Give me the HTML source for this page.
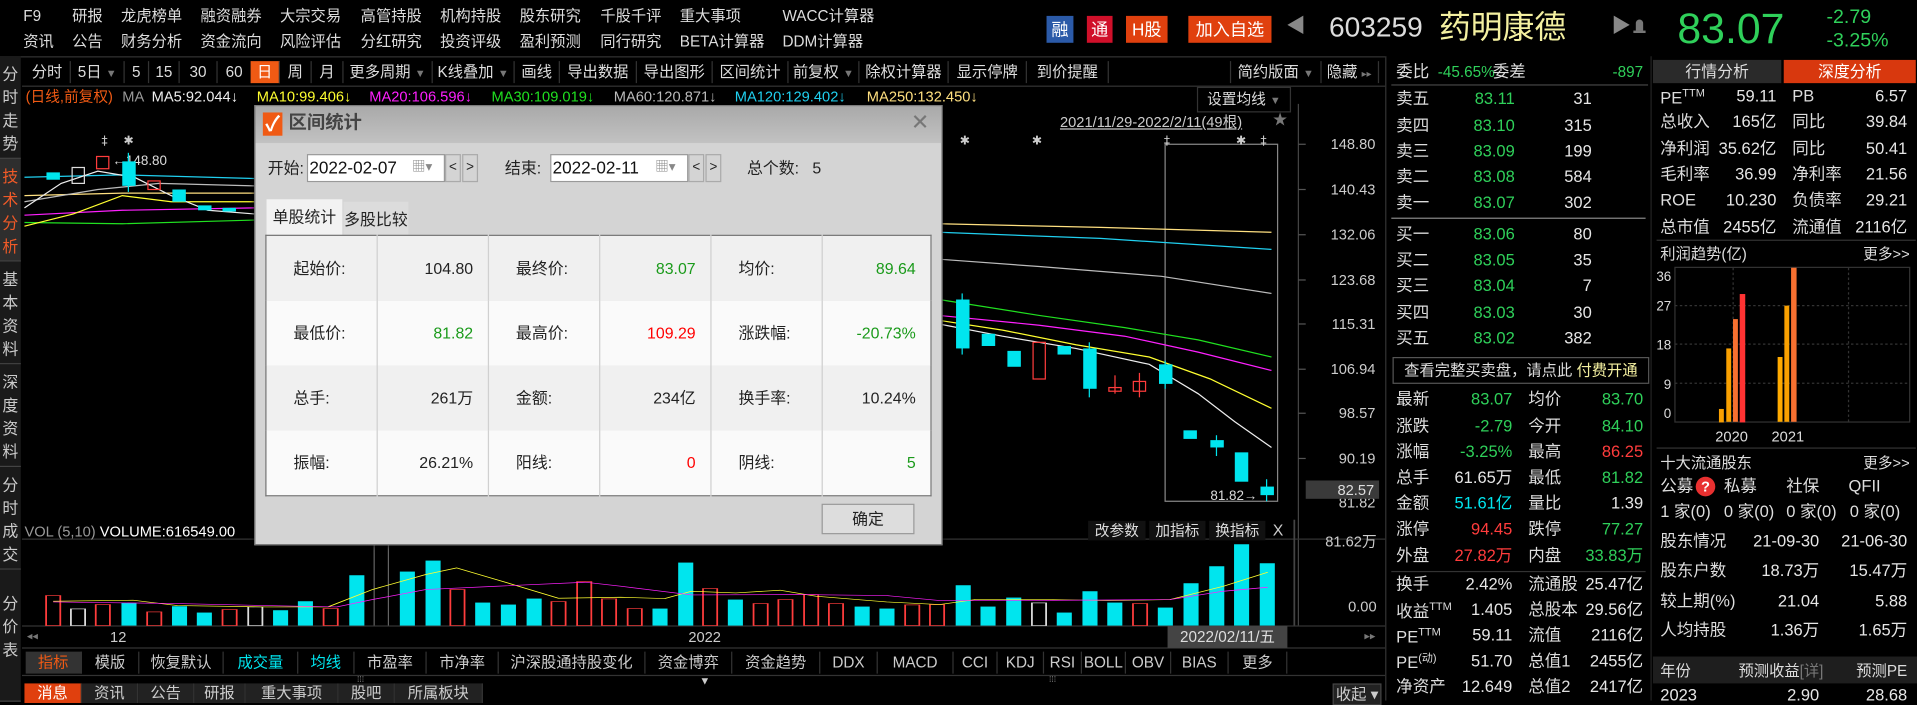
<!DOCTYPE html>
<html><head><meta charset="utf-8">
<style>
html,body{margin:0;padding:0;background:#000;overflow:hidden;width:1917px;height:701px}
#s{position:absolute;left:0;top:0;width:1568px;height:573px;transform:scale(1.22258);transform-origin:0 0;background:#000;font-family:"Liberation Sans","Noto Sans CJK SC",sans-serif;color:#ddd;font-size:12.5px}
.a{position:absolute;white-space:nowrap;line-height:1}
.g{color:#2fd05a}.r{color:#ff3c3c}.w{color:#e6e6e6}.c{color:#00e5ee}.y{color:#ffff40}
.tb{position:absolute;top:50px;height:18px;line-height:18px;text-align:center;border-right:1px solid #333;color:#ddd;font-size:12.5px}
.it{position:absolute;top:533px;height:18px;line-height:18px;text-align:center;border-right:1px solid #333;font-size:12.5px;color:#ccc}
.bt{position:absolute;top:559px;height:16px;line-height:16px;text-align:center;background:#222;border-right:1px solid #333;font-size:12.5px;color:#ccc}
.lt{position:absolute;left:0;width:17px;text-align:center;font-size:13px;line-height:19px;color:#ccc;background:#1a1a1a;border-bottom:1px solid #444}
.ob{font-size:13.5px}
.dl td{border-right:1px solid #d0d0d0;font-size:13px;color:#222;height:53px;padding:0}
</style></head><body><div id="s">

<div class="a" style="top:7px;left:19px;font-size:12.5px">F9</div>
<div class="a" style="top:7px;left:59px">研报</div><div class="a" style="top:7px;left:99px">龙虎榜单</div><div class="a" style="top:7px;left:164px">融资融券</div><div class="a" style="top:7px;left:229px">大宗交易</div><div class="a" style="top:7px;left:295px">高管持股</div><div class="a" style="top:7px;left:360px">机构持股</div><div class="a" style="top:7px;left:425px">股东研究</div><div class="a" style="top:7px;left:491px">千股千评</div><div class="a" style="top:7px;left:556px">重大事项</div><div class="a" style="top:7px;left:640px">WACC计算器</div>
<div class="a" style="top:28px;left:19px">资讯</div><div class="a" style="top:28px;left:59px">公告</div><div class="a" style="top:28px;left:99px">财务分析</div><div class="a" style="top:28px;left:164px">资金流向</div><div class="a" style="top:28px;left:229px">风险评估</div><div class="a" style="top:28px;left:295px">分红研究</div><div class="a" style="top:28px;left:360px">投资评级</div><div class="a" style="top:28px;left:425px">盈利预测</div><div class="a" style="top:28px;left:491px">同行研究</div><div class="a" style="top:28px;left:556px">BETA计算器</div><div class="a" style="top:28px;left:640px">DDM计算器</div>

<div class="a" style="left:856px;top:13px;width:22px;height:22px;background:#2b5aa8;color:#fff;font-size:14px;line-height:22px;text-align:center">融</div>
<div class="a" style="left:889px;top:13px;width:21px;height:22px;background:#d0102a;color:#fff;font-size:14px;line-height:22px;text-align:center">通</div>
<div class="a" style="left:921px;top:13px;width:34px;height:22px;background:#e0400e;color:#fff;font-size:14px;line-height:22px;text-align:center">H股</div>
<div class="a" style="left:972px;top:13px;width:68px;height:22px;background:#e0400e;color:#fff;font-size:14px;line-height:22px;text-align:center">加入自选</div>
<div class="a" style="left:1052px;top:14px;color:#888;font-size:16px">◀</div>
<div class="a" style="left:1087px;top:11px;color:#ddd;font-size:23px">603259</div>
<div class="a" style="left:1177px;top:9px;color:#f4f0a0;font-size:26px">药明康德</div>
<div class="a" style="left:1318px;top:14px;color:#888;font-size:16px">▶</div>
<div class="a" style="left:1338px;top:16px;width:6px;height:9px;background:#777;border-radius:3px 3px 0 0"></div>
<div class="a" style="left:1336px;top:25px;width:10px;height:2px;background:#777"></div>
<div class="a g" style="left:1372px;top:6px;font-size:35px">83.07</div>
<div class="a g" style="left:1494px;top:7px;font-size:16px">-2.79</div>
<div class="a g" style="left:1494px;top:26px;font-size:16px">-3.25%</div>

<div class="a" style="left:0;top:46px;width:1133px;height:1px;background:#333"></div>
<div class="tb" style="left:20px;width:37px">分时</div>
<div class="tb" style="left:58px;width:43px">5日 <span style="color:#777;font-size:9px">▼</span></div>
<div class="tb" style="left:102px;width:19px">5</div>
<div class="tb" style="left:122px;width:24px">15</div>
<div class="tb" style="left:147px;width:30px">30</div>
<div class="tb" style="left:178px;width:27px">60</div>
<div class="tb" style="left:205px;width:23px;background:#f05a14;color:#fff">日</div>
<div class="tb" style="left:229px;width:25px">周</div>
<div class="tb" style="left:255px;width:25px">月</div>
<div class="tb" style="left:281px;width:72px">更多周期 <span style="color:#777;font-size:9px">▼</span></div>
<div class="tb" style="left:354px;width:66px">K线叠加 <span style="color:#777;font-size:9px">▼</span></div>
<div class="tb" style="left:421px;width:36px">画线</div>
<div class="tb" style="left:458px;width:62px">导出数据</div>
<div class="tb" style="left:521px;width:61px">导出图形</div>
<div class="tb" style="left:583px;width:61px">区间统计</div>
<div class="tb" style="left:645px;width:57px">前复权 <span style="color:#777;font-size:9px">▼</span></div>
<div class="tb" style="left:703px;width:72px">除权计算器</div>
<div class="tb" style="left:776px;width:63px">显示停牌</div>
<div class="tb" style="left:840px;width:66px">到价提醒</div>
<div class="tb" style="left:1006px;width:73px;border-left:1px solid #333">简约版面 <span style="color:#777;font-size:9px">▼</span></div>
<div class="tb" style="left:1080px;width:47px">隐藏 <span style="color:#777;font-size:8px">▸▸</span></div>
<div class="a" style="left:18px;top:70px;width:1115px;height:1px;background:#333"></div>

<div class="lt" style="top:46px;height:83px"><div style="padding-top:5px">分<br>时<br>走<br>势</div></div>
<div class="lt" style="top:130px;height:83px;background:#2e2e2e;color:#f05a28"><div style="padding-top:5px">技<br>术<br>分<br>析</div></div>
<div class="lt" style="top:214px;height:83px"><div style="padding-top:5px">基<br>本<br>资<br>料</div></div>
<div class="lt" style="top:298px;height:83px"><div style="padding-top:5px">深<br>度<br>资<br>料</div></div>
<div class="lt" style="top:382px;height:83px"><div style="padding-top:5px">分<br>时<br>成<br>交</div></div>
<div class="lt" style="top:466px;height:107px"><div style="padding-top:18px">分<br>价<br>表</div></div>

<div class="a" style="top:73px;left:21px;font-size:12px;color:#f05a14">(日线,前复权)</div>
<div class="a" style="top:73px;left:100px;font-size:12px;color:#999">MA</div>
<div class="a" style="top:73px;left:124px;font-size:12px;color:#eee">MA5:92.044↓</div>
<div class="a" style="top:73px;left:210px;font-size:12px;color:#ffff30">MA10:99.406↓</div>
<div class="a" style="top:73px;left:302px;font-size:12px;color:#ff20ff">MA20:106.596↓</div>
<div class="a" style="top:73px;left:402px;font-size:12px;color:#20e020">MA30:109.019↓</div>
<div class="a" style="top:73px;left:502px;font-size:12px;color:#bbb">MA60:120.871↓</div>
<div class="a" style="top:73px;left:601px;font-size:12px;color:#20d0f0">MA120:129.402↓</div>
<div class="a" style="top:73px;left:709px;font-size:12px;color:#ffe080">MA250:132.450↓</div>
<div class="a" style="left:979px;top:71px;width:75px;height:19px;border:1px solid #333;font-size:12px;line-height:19px;text-align:center">设置均线 <span style="color:#777;font-size:9px">▼</span></div>
<div class="a" style="left:867px;top:94px;font-size:12px;color:#ccc;text-decoration:underline">2021/11/29-2022/2/11(49根)</div>
<div class="a" style="left:1041px;top:92px;font-size:12px;color:#777">★</div>

<svg class="a" style="left:0;top:0" width="1568" height="573">
<line x1="1062" y1="85" x2="1062" y2="512" stroke="#444"/>
<g fill="#ccc" font-size="12" font-family="Liberation Sans" text-anchor="end">
<text x="1125" y="122">148.80</text><text x="1125" y="159">140.43</text><text x="1125" y="196">132.06</text><text x="1125" y="233">123.68</text><text x="1125" y="269">115.31</text><text x="1125" y="306">106.94</text><text x="1125" y="342">98.57</text><text x="1125" y="379">90.19</text><text x="1125" y="415">81.82</text>
</g>
<g stroke="#555"><line x1="1062" y1="118" x2="1068" y2="118"/><line x1="1062" y1="155" x2="1068" y2="155"/><line x1="1062" y1="192" x2="1068" y2="192"/><line x1="1062" y1="229" x2="1068" y2="229"/><line x1="1062" y1="265" x2="1068" y2="265"/><line x1="1062" y1="302" x2="1068" y2="302"/><line x1="1062" y1="338" x2="1068" y2="338"/><line x1="1062" y1="375" x2="1068" y2="375"/></g>
<rect x="1068" y="393" width="60" height="15" fill="#3a3a3a"/><text x="1124" y="405" fill="#ddd" font-size="12" font-family="Liberation Sans" text-anchor="end">82.57</text>
<rect x="953" y="118" width="92" height="292" fill="none" stroke="#888"/>
<g fill="#ccc" font-size="10" font-family="DejaVu Sans"><text x="83" y="118">‡</text><text x="101" y="118">✱</text><text x="356" y="118">✱</text><text x="762" y="118">‡</text><text x="785" y="118">✱</text><text x="844" y="118">✱</text><text x="952" y="118">‡</text><text x="1011" y="118">✱</text><text x="1031" y="118">‡</text></g>
<text x="92" y="135" fill="#ddd" font-size="11" font-family="Liberation Sans">←148.80</text>
<text x="990" y="409" fill="#ddd" font-size="11" font-family="Liberation Sans">81.82→</text>
<g fill="none" stroke-width="1">
<polyline stroke="#ffe080" points="20,160 100,158 208,158"/>
<polyline stroke="#20d0f0" points="20,145 100,143 208,146"/>
<polyline stroke="#bbb" points="20,165 80,155 130,150 208,152"/>
<polyline stroke="#20e020" points="20,182 100,183 208,180"/>
<polyline stroke="#ff20ff" points="20,176 100,172 208,170"/>
<polyline stroke="#ffff30" points="20,185 60,175 100,160 140,165 208,165"/>
<polyline stroke="#eee" points="20,170 50,150 80,140 110,145 140,160 170,172 208,175"/>
<polyline stroke="#ffe080" points="768,183 900,186 1040,190"/>
<polyline stroke="#20d0f0" points="768,190 900,195 1040,204"/>
<polyline stroke="#bbb" points="768,212 850,218 950,226 1040,240"/>
<polyline stroke="#20e020" points="768,245 850,258 920,268 980,278 1040,292"/>
<polyline stroke="#ff20ff" points="768,258 850,266 920,275 980,288 1040,303"/>
<polyline stroke="#ffff30" points="768,262 820,270 880,282 940,292 990,310 1040,334"/>
<polyline stroke="#eee" points="768,265 820,275 880,285 940,298 980,322 1010,345 1040,366"/>
</g>
<g stroke-width="1">
<rect x="38" y="141" width="11" height="6" fill="#00e5ee"/>
<rect x="59" y="137" width="10" height="13" fill="none" stroke="#ddd"/>
<rect x="79" y="128" width="10" height="10" fill="none" stroke="#ff3c3c"/>
<line x1="105" y1="125" x2="105" y2="157" stroke="#00e5ee"/><rect x="100" y="132" width="11" height="20" fill="#00e5ee"/>
<rect x="121" y="148" width="10" height="7" fill="none" stroke="#ff3c3c"/>
<rect x="141" y="155" width="11" height="10" fill="#00e5ee"/>
<rect x="162" y="168" width="11" height="4" fill="#00e5ee"/>
<rect x="182" y="170" width="11" height="3" fill="#00e5ee"/>
<line x1="787" y1="240" x2="787" y2="290" stroke="#00e5ee"/><rect x="782" y="245" width="11" height="40" fill="#00e5ee"/>
<rect x="803" y="273" width="11" height="10" fill="#00e5ee"/>
<rect x="824" y="287" width="11" height="13" fill="#00e5ee"/>
<rect x="845" y="280" width="10" height="30" fill="none" stroke="#ff3c3c"/>
<rect x="865" y="283" width="11" height="7" fill="#00e5ee"/>
<line x1="891" y1="280" x2="891" y2="325" stroke="#00e5ee"/><rect x="886" y="285" width="11" height="33" fill="#00e5ee"/>
<line x1="912" y1="307" x2="912" y2="322" stroke="#ff3c3c"/><rect x="907" y="317" width="10" height="3" fill="none" stroke="#ff3c3c"/>
<line x1="932" y1="305" x2="932" y2="325" stroke="#ff3c3c"/><rect x="927" y="312" width="10" height="8" fill="none" stroke="#ff3c3c"/>
<line x1="953" y1="295" x2="953" y2="318" stroke="#00e5ee"/><rect x="948" y="298" width="11" height="16" fill="#00e5ee"/>
<rect x="968" y="352" width="11" height="7" fill="#00e5ee"/>
<line x1="995" y1="356" x2="995" y2="373" stroke="#00e5ee"/><rect x="990" y="360" width="11" height="6" fill="#00e5ee"/>
<rect x="1010" y="370" width="11" height="24" fill="#00e5ee"/>
<line x1="1036" y1="392" x2="1036" y2="410" stroke="#00e5ee"/><rect x="1031" y="398" width="11" height="7" fill="#00e5ee"/>
</g>
<line x1="18" y1="441" x2="1133" y2="441" stroke="#333"/>
<line x1="18" y1="512" x2="1133" y2="512" stroke="#333"/>
<line x1="18" y1="530" x2="1133" y2="530" stroke="#333"/>
</svg>

<div class="a" style="left:20px;top:429px;font-size:12px;color:#999">VOL (5,10) <span style="color:#fff">VOLUME:616549.00</span></div>
<div class="a" style="left:890px;top:426px;width:47px;height:16px;line-height:16px;font-size:12px;background:#111;text-align:center">改参数</div>
<div class="a" style="left:940px;top:426px;width:46px;height:16px;line-height:16px;font-size:12px;background:#111;text-align:center">加指标</div>
<div class="a" style="left:989px;top:426px;width:46px;height:16px;line-height:16px;font-size:12px;background:#111;text-align:center">换指标</div>
<div class="a" style="left:1041px;top:427px;font-size:13px;color:#ccc">X</div>
<div class="a" style="right:442px;top:437px;font-size:12px;color:#ccc">81.62万</div>
<div class="a" style="right:442px;top:490px;font-size:12px;color:#ccc">0.00</div>

<svg class="a" style="left:0;top:425.3px" width="1137" height="148" viewBox="0 0 1568 543" preserveAspectRatio="none">
<g stroke-width="2">
<rect x="52" y="228" width="16" height="90" fill="none" stroke="#ff3c3c"/>
<rect x="80" y="268" width="16" height="50" fill="none" stroke="#ddd"/>
<rect x="108" y="255" width="16" height="63" fill="none" stroke="#ff3c3c"/>
<rect x="137" y="250" width="17" height="68" fill="#00e5ee"/>
<rect x="166" y="277" width="16" height="41" fill="none" stroke="#ff3c3c"/>
<rect x="194" y="260" width="17" height="58" fill="#00e5ee"/>
<rect x="222" y="279" width="17" height="39" fill="#00e5ee"/>
<rect x="251" y="270" width="16" height="48" fill="none" stroke="#ff3c3c"/>
<rect x="280" y="262" width="16" height="56" fill="none" stroke="#ddd"/>
<rect x="308" y="272" width="17" height="46" fill="#00e5ee"/>
<rect x="336" y="245" width="17" height="73" fill="#00e5ee"/>
<rect x="365" y="267" width="16" height="51" fill="none" stroke="#ff3c3c"/>
<rect x="394" y="167" width="17" height="151" fill="#00e5ee"/>
<line x1="422" y1="0" x2="422" y2="318" stroke="#888" stroke-width="1"/><line x1="438" y1="0" x2="438" y2="318" stroke="#888" stroke-width="1"/>
<rect x="451" y="156" width="17" height="162" fill="#00e5ee"/>
<rect x="480" y="123" width="17" height="195" fill="#00e5ee"/>
<rect x="508" y="210" width="16" height="108" fill="none" stroke="#ff3c3c"/>
<rect x="536" y="249" width="17" height="69" fill="#00e5ee"/>
<rect x="565" y="255" width="17" height="63" fill="#00e5ee"/>
<rect x="594" y="237" width="17" height="81" fill="#00e5ee"/>
<rect x="622" y="246" width="16" height="72" fill="none" stroke="#ff3c3c"/>
<rect x="651" y="186" width="16" height="132" fill="none" stroke="#ff3c3c"/>
<rect x="679" y="238" width="16" height="80" fill="none" stroke="#ff3c3c"/>
<rect x="708" y="267" width="16" height="51" fill="none" stroke="#ff3c3c"/>
<rect x="736" y="267" width="17" height="51" fill="#00e5ee"/>
<rect x="765" y="129" width="17" height="189" fill="#00e5ee"/>
<rect x="793" y="207" width="16" height="111" fill="none" stroke="#ff3c3c"/>
<rect x="821" y="240" width="17" height="78" fill="#00e5ee"/>
<rect x="850" y="252" width="16" height="66" fill="none" stroke="#ff3c3c"/>
<rect x="878" y="240" width="16" height="78" fill="none" stroke="#ff3c3c"/>
<rect x="907" y="225" width="16" height="93" fill="none" stroke="#ff3c3c"/>
<rect x="935" y="252" width="16" height="66" fill="none" stroke="#ff3c3c"/>
<rect x="964" y="261" width="17" height="57" fill="#00e5ee"/>
<rect x="992" y="267" width="17" height="51" fill="#00e5ee"/>
<rect x="1021" y="256" width="16" height="62" fill="none" stroke="#ff3c3c"/>
<rect x="1049" y="255" width="16" height="63" fill="none" stroke="#ff3c3c"/>
<rect x="1078" y="197" width="17" height="121" fill="#00e5ee"/>
<rect x="1106" y="261" width="17" height="57" fill="#00e5ee"/>
<rect x="1135" y="234" width="17" height="84" fill="#00e5ee"/>
<rect x="1164" y="250" width="16" height="68" fill="none" stroke="#ddd"/>
<rect x="1192" y="279" width="17" height="39" fill="#00e5ee"/>
<rect x="1221" y="215" width="17" height="103" fill="#00e5ee"/>
<rect x="1249" y="249" width="17" height="69" fill="#00e5ee"/>
<rect x="1278" y="252" width="16" height="66" fill="none" stroke="#ff3c3c"/>
<rect x="1306" y="264" width="17" height="54" fill="#00e5ee"/>
<rect x="1335" y="191" width="17" height="127" fill="#00e5ee"/>
<rect x="1364" y="140" width="17" height="178" fill="#00e5ee"/>
<rect x="1392" y="74" width="17" height="244" fill="#00e5ee"/>
<rect x="1421" y="131" width="17" height="187" fill="#00e5ee"/>
</g>
<polyline fill="none" stroke="#ffff30" stroke-width="2" points="60,245 150,242 200,258 300,262 370,262 420,210 480,165 515,145 560,180 630,236 700,233 750,237 780,215 830,220 880,212 920,230 1000,247 1060,255 1100,240 1180,240 1250,243 1320,240 1380,200 1430,158"/>
<polyline fill="none" stroke="#ff20ff" stroke-width="2" points="60,247 200,252 300,258 380,262 420,240 480,210 560,200 660,188 700,200 780,226 900,225 1000,228 1060,243 1150,243 1320,240 1380,215 1430,203"/>
<line x1="1460" y1="0" x2="1460" y2="318" stroke="#444" stroke-width="2"/>
</svg>

<div class="a" style="left:22px;top:516px;font-size:9px;color:#777">◂◂</div>
<div class="a" style="left:90px;top:515px;font-size:12px;color:#ccc">12</div>
<div class="a" style="left:563px;top:515px;font-size:12px;color:#ccc">2022</div>
<div class="a" style="left:955px;top:512px;width:98px;height:18px;background:#444;line-height:18px;text-align:center;font-size:12.5px;color:#ddd">2022/02/11/五</div>
<div class="a" style="left:1116px;top:516px;font-size:9px;color:#777">▸▸</div>

<div class="it" style="left:21px;width:45px;background:#333;color:#f05a14">指标</div>
<div class="it" style="left:67px;width:46px">模版</div>
<div class="it" style="left:114px;width:68px">恢复默认</div>
<div class="it" style="left:183px;width:60px;color:#00e5ee">成交量</div>
<div class="it" style="left:244px;width:45px;color:#00e5ee">均线</div>
<div class="it" style="left:290px;width:58px">市盈率</div>
<div class="it" style="left:349px;width:58px">市净率</div>
<div class="it" style="left:408px;width:119px">沪深股通持股变化</div>
<div class="it" style="left:528px;width:70px">资金博弈</div>
<div class="it" style="left:599px;width:71px">资金趋势</div>
<div class="it" style="left:671px;width:46px">DDX</div>
<div class="it" style="left:718px;width:61px">MACD</div>
<div class="it" style="left:780px;width:35px">CCI</div>
<div class="it" style="left:816px;width:37px">KDJ</div>
<div class="it" style="left:854px;width:30px">RSI</div>
<div class="it" style="left:885px;width:35px">BOLL</div>
<div class="it" style="left:921px;width:36px">OBV</div>
<div class="it" style="left:958px;width:46px">BIAS</div>
<div class="it" style="left:1005px;width:47px">更多</div>
<div class="a" style="left:18px;top:552px;width:1115px;height:1px;background:#333"></div>
<div class="a" style="left:292px;top:553px;font-size:7px;color:#888">⁞⁞⁞</div>
<div class="a" style="left:572px;top:553px;font-size:9px;color:#ccc">▼</div>
<div class="a" style="left:858px;top:553px;font-size:7px;color:#888">⁞⁞⁞</div>
<div class="bt" style="left:20px;width:46px;background:#e0400e;color:#fff">消息</div>
<div class="bt" style="left:67px;width:45px">资讯</div>
<div class="bt" style="left:113px;width:45px">公告</div>
<div class="bt" style="left:159px;width:41px">研报</div>
<div class="bt" style="left:201px;width:75px">重大事项</div>
<div class="bt" style="left:277px;width:45px">股吧</div>
<div class="bt" style="left:323px;width:71px">所属板块</div>
<div class="bt" style="left:1090px;width:38px;border:1px solid #444">收起 ▾</div>

<div class="a" style="left:208px;top:86px;width:561px;height:358px;background:#d4d4d4;border:1px solid #777;box-shadow:0 0 4px #000">
 <div style="position:absolute;left:0;top:0;width:561px;height:30px;background:linear-gradient(#a9a9a9,#c2c2c2)"></div>
 <div style="position:absolute;left:6px;top:5px;width:16px;height:19px;background:#f05a14;color:#fff;font-size:17px;line-height:19px;text-align:center;font-weight:bold">✓</div>
 <div style="position:absolute;left:27px;top:6px;font-size:15px;color:#444;font-weight:bold">区间统计</div>
 <div style="position:absolute;left:536px;top:4px;font-size:18px;color:#777">✕</div>
 <div style="position:absolute;left:10px;top:44px;font-size:13px;color:#222">开始:</div>
 <div style="position:absolute;left:42px;top:39px;width:110px;height:21px;background:#fff;border:1px solid #999;font-size:14px;line-height:21px;color:#111;padding-left:1px">2022-02-07<span style="position:absolute;left:85px;top:0;font-size:11px;color:#888">▦▾</span></div>
 <div style="position:absolute;left:155px;top:39px;width:11px;height:21px;border:1px solid #aaa;font-size:11px;line-height:21px;text-align:center;color:#222">&lt;</div>
 <div style="position:absolute;left:169px;top:39px;width:11px;height:21px;border:1px solid #aaa;font-size:11px;line-height:21px;text-align:center;color:#222">&gt;</div>
 <div style="position:absolute;left:204px;top:44px;font-size:13px;color:#222">结束:</div>
 <div style="position:absolute;left:241px;top:39px;width:110px;height:21px;background:#fff;border:1px solid #999;font-size:14px;line-height:21px;color:#111;padding-left:1px">2022-02-11<span style="position:absolute;left:85px;top:0;font-size:11px;color:#888">▦▾</span></div>
 <div style="position:absolute;left:354px;top:39px;width:11px;height:21px;border:1px solid #aaa;font-size:11px;line-height:21px;text-align:center;color:#222">&lt;</div>
 <div style="position:absolute;left:368px;top:39px;width:11px;height:21px;border:1px solid #aaa;font-size:11px;line-height:21px;text-align:center;color:#222">&gt;</div>
 <div style="position:absolute;left:402px;top:44px;font-size:13px;color:#222">总个数:&nbsp;&nbsp; 5</div>
 <div style="position:absolute;left:9px;top:76px;width:62px;height:29px;background:#f2f2f2;font-size:13px;line-height:29px;text-align:center;color:#222">单股统计</div>
 <div style="position:absolute;left:72px;top:78px;width:53px;height:27px;background:#dcdcdc;font-size:13px;line-height:29px;text-align:center;color:#222">多股比较</div>
 <table class="dl" style="position:absolute;left:8px;top:105px;width:545px;border:1px solid #777;border-collapse:collapse" cellspacing="0">
  <tr style="background:#f0f0f0"><td style="padding-left:22px">起始价:</td><td style="text-align:right;padding-right:12px">104.80</td><td style="padding-left:22px">最终价:</td><td style="text-align:right;padding-right:12px;color:#1a9a1a">83.07</td><td style="padding-left:22px">均价:</td><td style="text-align:right;padding-right:12px;color:#1a9a1a;border-right:0">89.64</td></tr>
  <tr style="background:#fafafa"><td style="padding-left:22px">最低价:</td><td style="text-align:right;padding-right:12px;color:#1a9a1a">81.82</td><td style="padding-left:22px">最高价:</td><td style="text-align:right;padding-right:12px;color:#f00">109.29</td><td style="padding-left:22px">涨跌幅:</td><td style="text-align:right;padding-right:12px;color:#1a9a1a;border-right:0">-20.73%</td></tr>
  <tr style="background:#f0f0f0"><td style="padding-left:22px">总手:</td><td style="text-align:right;padding-right:12px">261万</td><td style="padding-left:22px">金额:</td><td style="text-align:right;padding-right:12px">234亿</td><td style="padding-left:22px">换手率:</td><td style="text-align:right;padding-right:12px;border-right:0">10.24%</td></tr>
  <tr style="background:#fafafa"><td style="padding-left:22px;width:68px">振幅:</td><td style="text-align:right;padding-right:12px;width:78px">26.21%</td><td style="padding-left:22px;width:68px">阳线:</td><td style="text-align:right;padding-right:12px;color:#f00;width:78px">0</td><td style="padding-left:22px;width:68px">阴线:</td><td style="text-align:right;padding-right:12px;color:#1a9a1a;border-right:0">5</td></tr>
 </table>
 <div style="position:absolute;left:463px;top:325px;width:74px;height:23px;border:1px solid #999;background:#ddd;font-size:13px;line-height:23px;text-align:center;color:#222">确定</div>
</div>

<div class="a" style="left:1133px;top:46px;width:1px;height:527px;background:#333"></div>
<div class="a" style="left:1142px;top:52px;font-size:13.5px">委比</div>
<div class="a g" style="left:1176px;top:53px;font-size:12.5px">-45.65%</div>
<div class="a" style="left:1221px;top:52px;font-size:13.5px">委差</div>
<div class="a g" style="right:224px;top:53px;font-size:12.5px">-897</div>
<div class="a" style="left:1138px;top:69px;width:210px;height:1px;background:#444"></div>
<div class="ob">
<div class="a" style="left:1142px;top:74px">卖五</div><div class="a g" style="right:329px;top:74px">83.11</div><div class="a w" style="right:266px;top:74px">31</div>
<div class="a" style="left:1142px;top:96px">卖四</div><div class="a g" style="right:329px;top:96px">83.10</div><div class="a w" style="right:266px;top:96px">315</div>
<div class="a" style="left:1142px;top:117px">卖三</div><div class="a g" style="right:329px;top:117px">83.09</div><div class="a w" style="right:266px;top:117px">199</div>
<div class="a" style="left:1142px;top:138px">卖二</div><div class="a g" style="right:329px;top:138px">83.08</div><div class="a w" style="right:266px;top:138px">584</div>
<div class="a" style="left:1142px;top:159px">卖一</div><div class="a g" style="right:329px;top:159px">83.07</div><div class="a w" style="right:266px;top:159px">302</div>
<div class="a" style="left:1138px;top:178px;width:208px;height:1px;background:#888"></div>
<div class="a" style="left:1142px;top:185px">买一</div><div class="a g" style="right:329px;top:185px">83.06</div><div class="a w" style="right:266px;top:185px">80</div>
<div class="a" style="left:1142px;top:206px">买二</div><div class="a g" style="right:329px;top:206px">83.05</div><div class="a w" style="right:266px;top:206px">35</div>
<div class="a" style="left:1142px;top:227px">买三</div><div class="a g" style="right:329px;top:227px">83.04</div><div class="a w" style="right:266px;top:227px">7</div>
<div class="a" style="left:1142px;top:249px">买四</div><div class="a g" style="right:329px;top:249px">83.03</div><div class="a w" style="right:266px;top:249px">30</div>
<div class="a" style="left:1142px;top:270px">买五</div><div class="a g" style="right:329px;top:270px">83.02</div><div class="a w" style="right:266px;top:270px">382</div>
</div>
<div class="a" style="left:1139px;top:292px;width:208px;height:20px;border:1px solid #555;font-size:12.5px;line-height:20px;text-align:center;color:#ddd">查看完整买卖盘，请点此 <span style="color:#f4f0a0">付费开通</span></div>
<div class="ob">
<div class="a" style="left:1142px;top:320px">最新</div><div class="a g" style="right:331px;top:320px">83.07</div><div class="a" style="left:1250px;top:320px">均价</div><div class="a g" style="right:224px;top:320px">83.70</div>
<div class="a" style="left:1142px;top:342px">涨跌</div><div class="a g" style="right:331px;top:342px">-2.79</div><div class="a" style="left:1250px;top:342px">今开</div><div class="a g" style="right:224px;top:342px">84.10</div>
<div class="a" style="left:1142px;top:363px">涨幅</div><div class="a g" style="right:331px;top:363px">-3.25%</div><div class="a" style="left:1250px;top:363px">最高</div><div class="a r" style="right:224px;top:363px">86.25</div>
<div class="a" style="left:1142px;top:384px">总手</div><div class="a w" style="right:331px;top:384px">61.65万</div><div class="a" style="left:1250px;top:384px">最低</div><div class="a g" style="right:224px;top:384px">81.82</div>
<div class="a" style="left:1142px;top:405px">金额</div><div class="a c" style="right:331px;top:405px">51.61亿</div><div class="a" style="left:1250px;top:405px">量比</div><div class="a w" style="right:224px;top:405px">1.39</div>
<div class="a" style="left:1142px;top:426px">涨停</div><div class="a r" style="right:331px;top:426px">94.45</div><div class="a" style="left:1250px;top:426px">跌停</div><div class="a g" style="right:224px;top:426px">77.27</div>
<div class="a" style="left:1142px;top:448px">外盘</div><div class="a r" style="right:331px;top:448px">27.82万</div><div class="a" style="left:1250px;top:448px">内盘</div><div class="a g" style="right:224px;top:448px">33.83万</div>
<div class="a" style="left:1138px;top:467px;width:208px;height:1px;background:#333"></div>
<div class="a" style="left:1142px;top:471px">换手</div><div class="a w" style="right:331px;top:471px">2.42%</div><div class="a" style="left:1250px;top:471px">流通股</div><div class="a w" style="right:224px;top:471px">25.47亿</div>
<div class="a" style="left:1142px;top:492px">收益<sup style="font-size:9px">TTM</sup></div><div class="a w" style="right:331px;top:492px">1.405</div><div class="a" style="left:1250px;top:492px">总股本</div><div class="a w" style="right:224px;top:492px">29.56亿</div>
<div class="a" style="left:1142px;top:513px">PE<sup style="font-size:9px">TTM</sup></div><div class="a w" style="right:331px;top:513px">59.11</div><div class="a" style="left:1250px;top:513px">流值</div><div class="a w" style="right:224px;top:513px">2116亿</div>
<div class="a" style="left:1142px;top:534px">PE<sup style="font-size:9px">(动)</sup></div><div class="a w" style="right:331px;top:534px">51.70</div><div class="a" style="left:1250px;top:534px">总值1</div><div class="a w" style="right:224px;top:534px">2455亿</div>
<div class="a" style="left:1142px;top:555px">净资产</div><div class="a w" style="right:331px;top:555px">12.649</div><div class="a" style="left:1250px;top:555px">总值2</div><div class="a w" style="right:224px;top:555px">2417亿</div>
</div>

<div class="a" style="left:1350px;top:46px;width:1px;height:527px;background:#222"></div>
<div class="a" style="left:1352px;top:49px;width:105px;height:19px;background:#2a2a2a;font-size:13px;line-height:19px;text-align:center">行情分析</div>
<div class="a" style="left:1459px;top:49px;width:108px;height:19px;background:#d8380e;color:#fff;font-size:13px;line-height:19px;text-align:center">深度分析</div>
<div class="ob">
<div class="a" style="left:1358px;top:72px">PE<sup style="font-size:9px">TTM</sup></div><div class="a w" style="right:115px;top:72px">59.11</div><div class="a" style="left:1466px;top:72px">PB</div><div class="a w" style="right:8px;top:72px">6.57</div>
<div class="a" style="left:1358px;top:93px">总收入</div><div class="a w" style="right:115px;top:93px">165亿</div><div class="a" style="left:1466px;top:93px">同比</div><div class="a w" style="right:8px;top:93px">39.84</div>
<div class="a" style="left:1358px;top:115px">净利润</div><div class="a w" style="right:115px;top:115px">35.62亿</div><div class="a" style="left:1466px;top:115px">同比</div><div class="a w" style="right:8px;top:115px">50.41</div>
<div class="a" style="left:1358px;top:136px">毛利率</div><div class="a w" style="right:115px;top:136px">36.99</div><div class="a" style="left:1466px;top:136px">净利率</div><div class="a w" style="right:8px;top:136px">21.56</div>
<div class="a" style="left:1358px;top:157px">ROE</div><div class="a w" style="right:115px;top:157px">10.230</div><div class="a" style="left:1466px;top:157px">负债率</div><div class="a w" style="right:8px;top:157px">29.21</div>
<div class="a" style="left:1358px;top:179px">总市值</div><div class="a w" style="right:115px;top:179px">2455亿</div><div class="a" style="left:1466px;top:179px">流通值</div><div class="a w" style="right:8px;top:179px">2116亿</div>
</div>
<div class="a" style="left:1355px;top:196px;width:212px;height:1px;background:#333"></div>
<div class="a" style="left:1358px;top:202px;font-size:12.5px">利润趋势(亿)</div>
<div class="a" style="right:6px;top:202px;font-size:12px">更多&gt;&gt;</div>
<svg class="a" style="left:0;top:0" width="1568" height="573">
<rect x="1370" y="218.7" width="192" height="126.5" fill="none" stroke="#333"/>
<g stroke="#333" stroke-dasharray="2,2"><line x1="1370" y1="250" x2="1562" y2="250"/><line x1="1370" y1="281.5" x2="1562" y2="281.5"/><line x1="1370" y1="313.5" x2="1562" y2="313.5"/><line x1="1417.6" y1="219" x2="1417.6" y2="345"/><line x1="1512" y1="219" x2="1512" y2="345"/></g>
<g fill="#ddd" font-size="11" font-family="Liberation Sans" text-anchor="end"><text x="1367" y="230">36</text><text x="1367" y="254">27</text><text x="1367" y="286">18</text><text x="1367" y="318">9</text><text x="1367" y="342">0</text></g>
<rect x="1406" y="334.5" width="4" height="11" fill="#f9a000"/>
<rect x="1412" y="285" width="4" height="60" fill="#f9a000"/>
<rect x="1417.5" y="261" width="4" height="84" fill="#f77030"/>
<rect x="1423" y="240.5" width="4.5" height="105" fill="#f33"/>
<rect x="1454" y="292" width="4" height="53" fill="#fa0"/>
<rect x="1459.5" y="250" width="4" height="95" fill="#f9a000"/>
<rect x="1465" y="219" width="4.5" height="126" fill="#f77030"/>
<g fill="#ddd" font-size="12" font-family="Liberation Sans"><text x="1403" y="361">2020</text><text x="1449" y="361">2021</text></g>
</svg>
<div class="a" style="left:1355px;top:366px;width:212px;height:1px;background:#333"></div>
<div class="a" style="left:1358px;top:373px;font-size:12.5px">十大流通股东</div>
<div class="a" style="right:6px;top:373px;font-size:12px">更多&gt;&gt;</div>
<div class="ob">
<div class="a" style="left:1358px;top:391px">公募</div>
<div class="a" style="left:1387px;top:390px;width:16px;height:16px;border-radius:8px;background:#e83030;color:#fff;font-size:12px;line-height:16px;text-align:center;font-weight:bold">?</div>
<div class="a" style="left:1410px;top:391px">私募</div><div class="a" style="left:1461px;top:391px">社保</div><div class="a" style="left:1512px;top:391px">QFII</div>
<div class="a" style="left:1358px;top:412px">1 家(0)</div><div class="a" style="left:1410px;top:412px">0 家(0)</div><div class="a" style="left:1461px;top:412px">0 家(0)</div><div class="a" style="left:1513px;top:412px">0 家(0)</div>
<div class="a" style="left:1358px;top:436px">股东情况</div><div class="a w" style="right:80px;top:436px">21-09-30</div><div class="a w" style="right:8px;top:436px">21-06-30</div>
<div class="a" style="left:1358px;top:460px">股东户数</div><div class="a w" style="right:80px;top:460px">18.73万</div><div class="a w" style="right:8px;top:460px">15.47万</div>
<div class="a" style="left:1358px;top:485px">较上期(%)</div><div class="a w" style="right:80px;top:485px">21.04</div><div class="a w" style="right:8px;top:485px">5.88</div>
<div class="a" style="left:1358px;top:509px">人均持股</div><div class="a w" style="right:80px;top:509px">1.36万</div><div class="a w" style="right:8px;top:509px">1.65万</div>
</div>
<div class="a" style="left:1352px;top:537px;width:216px;height:22px;background:#1e1e1e"></div>
<div class="a" style="left:1358px;top:543px;font-size:12.5px">年份</div>
<div class="a" style="left:1422px;top:543px;font-size:12.5px">预测收益<span style="color:#777">[详]</span></div>
<div class="a" style="right:8px;top:543px;font-size:12.5px">预测PE</div>
<div class="a ob w" style="left:1358px;top:562px">2023</div>
<div class="a ob w" style="right:80px;top:562px">2.90</div>
<div class="a ob w" style="right:8px;top:562px">28.68</div>

</div></body></html>
